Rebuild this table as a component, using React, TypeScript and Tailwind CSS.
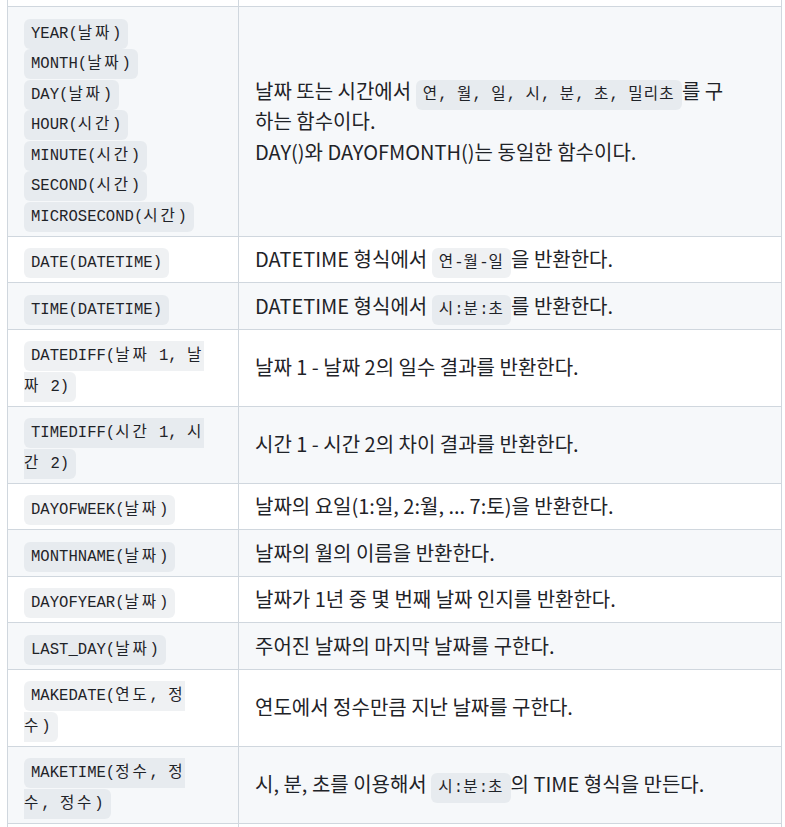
import type { ReactNode } from "react";

type Row = {
  chips: string[][];
  desc: ReactNode;
};

const HANGUL = /([\uAC00-\uD7A3]+)/;

function runs(text: string, wide: string) {
  return text.split(HANGUL).map((part, i) =>
    HANGUL.test(part) ? (
      <span key={i} className={wide}>
        {part}
      </span>
    ) : (
      part
    )
  );
}

function Code({ lines, wide = "tracking-[2.8px]" }: { lines: string[]; wide?: string }) {
  return (
    <code className="rounded-[6px] bg-[#afb8c133] px-[7px] py-[6px] font-[family-name:'Liberation_Mono','Noto_Sans_CJK_KR',monospace] text-[15.6px] leading-none whitespace-nowrap">
      {lines.map((line, i) => (
        <span key={i}>
          {i > 0 && <br />}
          {runs(line, wide)}
        </span>
      ))}
    </code>
  );
}

function Inline({ text }: { text: string }) {
  return <Code lines={[text]} wide="tracking-[1.2px]" />;
}

const ROWS: Row[] = [
  {
    chips: [
      ["YEAR(날짜)"],
      ["MONTH(날짜)"],
      ["DAY(날짜)"],
      ["HOUR(시간)"],
      ["MINUTE(시간)"],
      ["SECOND(시간)"],
      ["MICROSECOND(시간)"],
    ],
    desc: (
      <>
        날짜 또는 시간에서 <Inline text="연, 월, 일, 시, 분, 초, 밀리초" />를 구
        <br />
        하는 함수이다.
        <br />
        DAY()와 DAYOFMONTH()는 동일한 함수이다.
      </>
    ),
  },
  {
    chips: [["DATE(DATETIME)"]],
    desc: (
      <>
        DATETIME 형식에서 <Inline text="연-월-일" />을 반환한다.
      </>
    ),
  },
  {
    chips: [["TIME(DATETIME)"]],
    desc: (
      <>
        DATETIME 형식에서 <Inline text="시:분:초" />를 반환한다.
      </>
    ),
  },
  {
    chips: [["DATEDIFF(날짜 1, 날", "짜 2)"]],
    desc: "날짜 1 - 날짜 2의 일수 결과를 반환한다.",
  },
  {
    chips: [["TIMEDIFF(시간 1, 시", "간 2)"]],
    desc: "시간 1 - 시간 2의 차이 결과를 반환한다.",
  },
  {
    chips: [["DAYOFWEEK(날짜)"]],
    desc: "날짜의 요일(1:일, 2:월, ... 7:토)을 반환한다.",
  },
  {
    chips: [["MONTHNAME(날짜)"]],
    desc: "날짜의 월의 이름을 반환한다.",
  },
  {
    chips: [["DAYOFYEAR(날짜)"]],
    desc: "날짜가 1년 중 몇 번째 날짜 인지를 반환한다.",
  },
  {
    chips: [["LAST_DAY(날짜)"]],
    desc: "주어진 날짜의 마지막 날짜를 구한다.",
  },
  {
    chips: [["MAKEDATE(연도, 정", "수)"]],
    desc: "연도에서 정수만큼 지난 날짜를 구한다.",
  },
  {
    chips: [["MAKETIME(정수, 정", "수, 정수)"]],
    desc: (
      <>
        시, 분, 초를 이용해서 <Inline text="시:분:초" />의 TIME 형식을 만든다.
      </>
    ),
  },
];

const cell = "border border-[#d0d7de] px-4 py-[7.5px] align-middle";

export default function App() {
  return (
    <div className="min-h-screen overflow-hidden bg-white">
      <table className="-mt-px ml-[7px] w-[775px] table-fixed border-collapse font-[family-name:'Noto_Sans_CJK_KR',sans-serif] text-[20px] leading-[30.5px] text-[#1f2328]">
        <colgroup>
          <col className="w-[231px]" />
          <col />
        </colgroup>
        <tbody>
          <tr className="bg-white">
            <td className="h-[7px] border border-[#d0d7de] p-0" />
            <td className="h-[7px] border border-[#d0d7de] p-0" />
          </tr>
          {ROWS.map((row, i) => (
            <tr key={i} className={i % 2 === 0 ? "bg-[#f6f8fa]" : "bg-white"}>
              <td className={cell}>
                {row.chips.map((lines, j) => (
                  <span key={j}>
                    {j > 0 && <br />}
                    <Code lines={lines} />
                  </span>
                ))}
              </td>
              <td className={cell}>{row.desc}</td>
            </tr>
          ))}
          <tr className="bg-white">
            <td className={cell}>&nbsp;</td>
            <td className={cell}>&nbsp;</td>
          </tr>
        </tbody>
      </table>
    </div>
  );
}
